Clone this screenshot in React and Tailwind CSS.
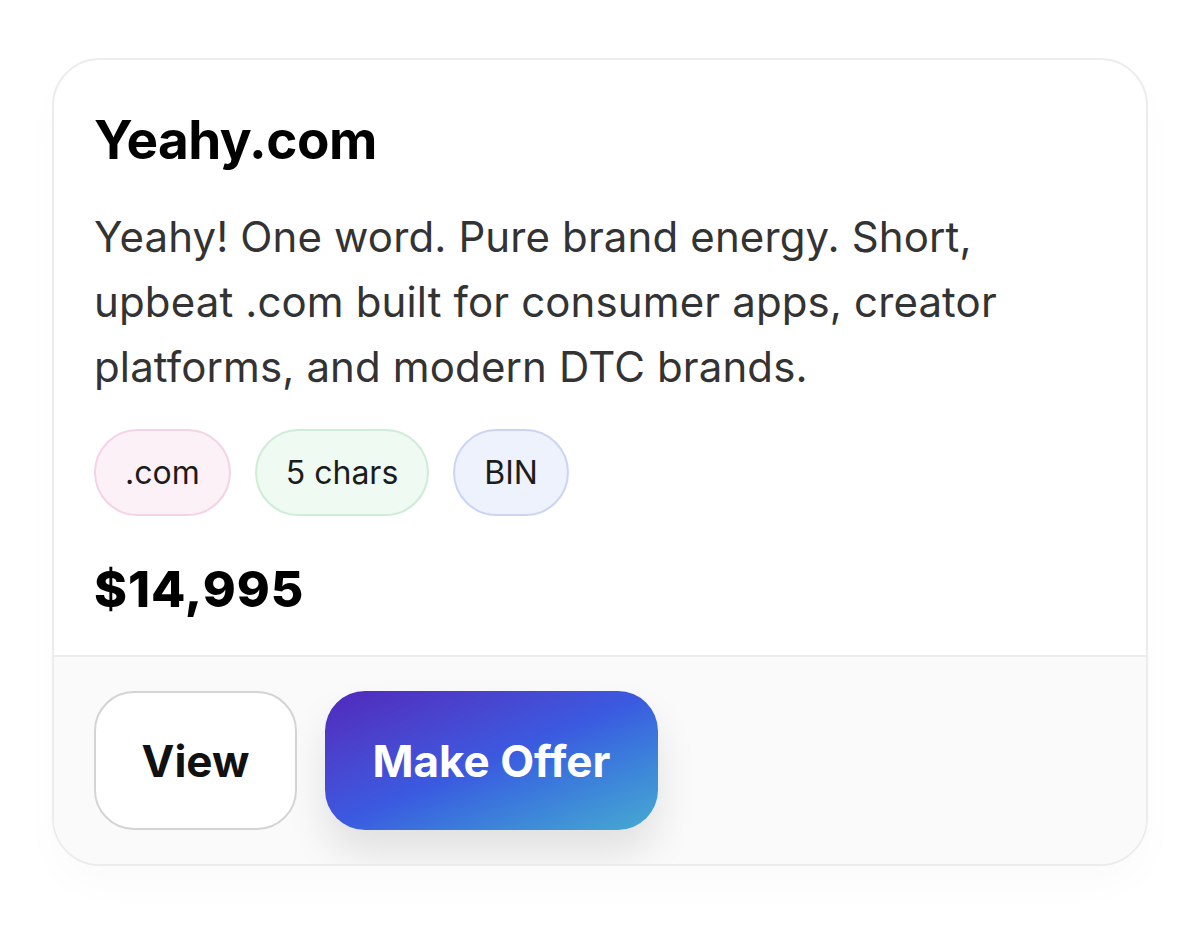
export default function App() {
  return (
    <div className="min-h-screen bg-white pt-[58px] pl-[52px] pr-[52px]" style={{ fontFamily: 'Inter, "Noto Sans", sans-serif' }}>
      <div className="w-[1096px] rounded-[48px] border-2 border-[#ececec] bg-white overflow-hidden shadow-[0_20px_40px_rgba(0,0,0,0.02)]">
        <div className="px-[40px] pt-[48px] pb-[38px]">
          <h1 className="text-[53px] leading-[64px] font-bold text-black tracking-[-0.01em]">Yeahy.com</h1>
          <p className="mt-[32px] w-[965px] text-[42px] leading-[65px] text-[#333333] tracking-[0.003em]">
            Yeahy! One word. Pure brand energy. Short, upbeat .com built for consumer apps, creator platforms, and modern DTC brands.
          </p>
          <div className="mt-[30px] flex gap-[24px]">
            <span className="h-[87px] px-[29px] flex items-center rounded-full border-2 border-[#f4d3e6] bg-[#fdf1f8] text-[32px] text-[#1c1c1c]">.com</span>
            <span className="h-[87px] px-[29px] flex items-center rounded-full border-2 border-[#cfecd8] bg-[#eefaf2] text-[32px] text-[#1c1c1c]">5 chars</span>
            <span className="h-[87px] px-[29px] flex items-center rounded-full border-2 border-[#cbd5f3] bg-[#eef2fd] text-[32px] text-[#1c1c1c]">BIN</span>
          </div>
          <div className="mt-[45px] text-[50px] leading-[56px] font-extrabold text-black tracking-[0.02em]">$14,995</div>
        </div>
        <div className="border-t-2 border-[#ececec] bg-[#fafafa] px-[40px] pt-[34px] pb-[34px] flex gap-[28px]">
          <button className="w-[203px] h-[139px] rounded-[40px] border-2 border-[#d4d4d4] bg-white text-[44px] font-bold text-[#111]">View</button>
          <button className="w-[333px] h-[139px] rounded-[40px] bg-gradient-to-br from-[#5127bb] via-[#3a5ae0] to-[#48aad0] text-[44px] font-bold text-white shadow-[0_24px_40px_rgba(0,0,0,0.10)]">Make Offer</button>
        </div>
      </div>
    </div>
  );
}
